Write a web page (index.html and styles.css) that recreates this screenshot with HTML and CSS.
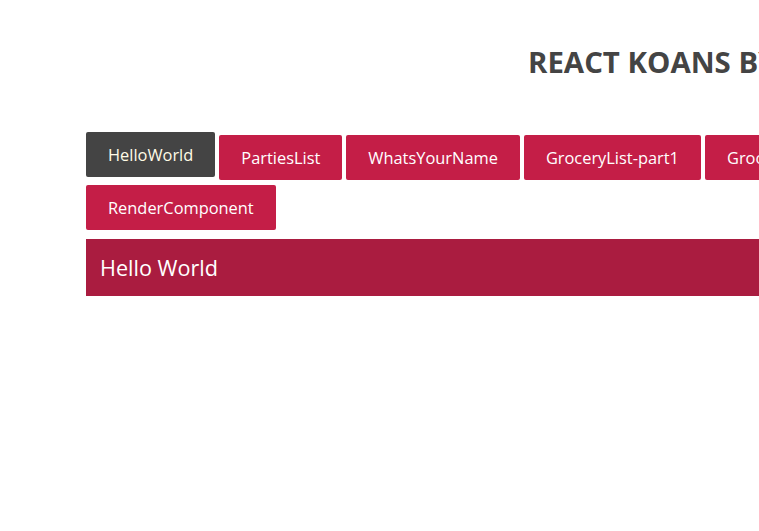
FILE: index.html
```html
<!DOCTYPE html>
<html>
<head>
<meta charset="utf-8">
<link rel="stylesheet" href="styles.css">
</head>
<body>
<div class="page">
  <h1 class="title">REACT KOANS BY ARKENCY</h1>
  <nav class="tabs">
    <a class="tab active">HelloWorld</a>
    <a class="tab">PartiesList</a>
    <a class="tab">WhatsYourName</a>
    <a class="tab">GroceryList-part1</a>
    <a class="tab">GroceryList-part2</a>
    <a class="tab">GroceryList-part3</a>
    <a class="tab">GroceryList-part4</a>
    <a class="tab">RenderComponent</a>
  </nav>
  <div class="panel">Hello World</div>
</div>
</body>
</html>
```

FILE: styles.css
```css
html, body {
  margin: 0;
  padding: 0;
  background: #fff;
}
body {
  font-family: "Open Sans", "Noto Sans", sans-serif;
  overflow: hidden;
}
.page {
  margin-left: 86px;
  width: 1190px;
}
.title {
  margin: 42px 0 0 0;
  padding-left: 442px;
  font-size: 29.4px;
  line-height: 40px;
  font-weight: 700;
  color: #444444;
  white-space: nowrap;
}
.tabs {
  margin-top: 50px;
  display: flex;
  flex-wrap: wrap;
  align-items: flex-start;
  column-gap: 4px;
  row-gap: 2px;
}
.tab {
  display: block;
  margin-top: 3px;
  padding: 10px 22px;
  font-size: 16.4px;
  line-height: 25px;
  color: #fff;
  background: #c41e47;
  border-radius: 2px;
  white-space: nowrap;
}
.tab.active {
  margin-top: 0;
  margin-bottom: 3px;
  background: #444444;
  color: #fffbe6;
}
.panel {
  margin-top: 9px;
  padding: 13px 14px;
  font-size: 21.6px;
  line-height: 31px;
  color: #fff;
  background: #aa1c40;
}
```
